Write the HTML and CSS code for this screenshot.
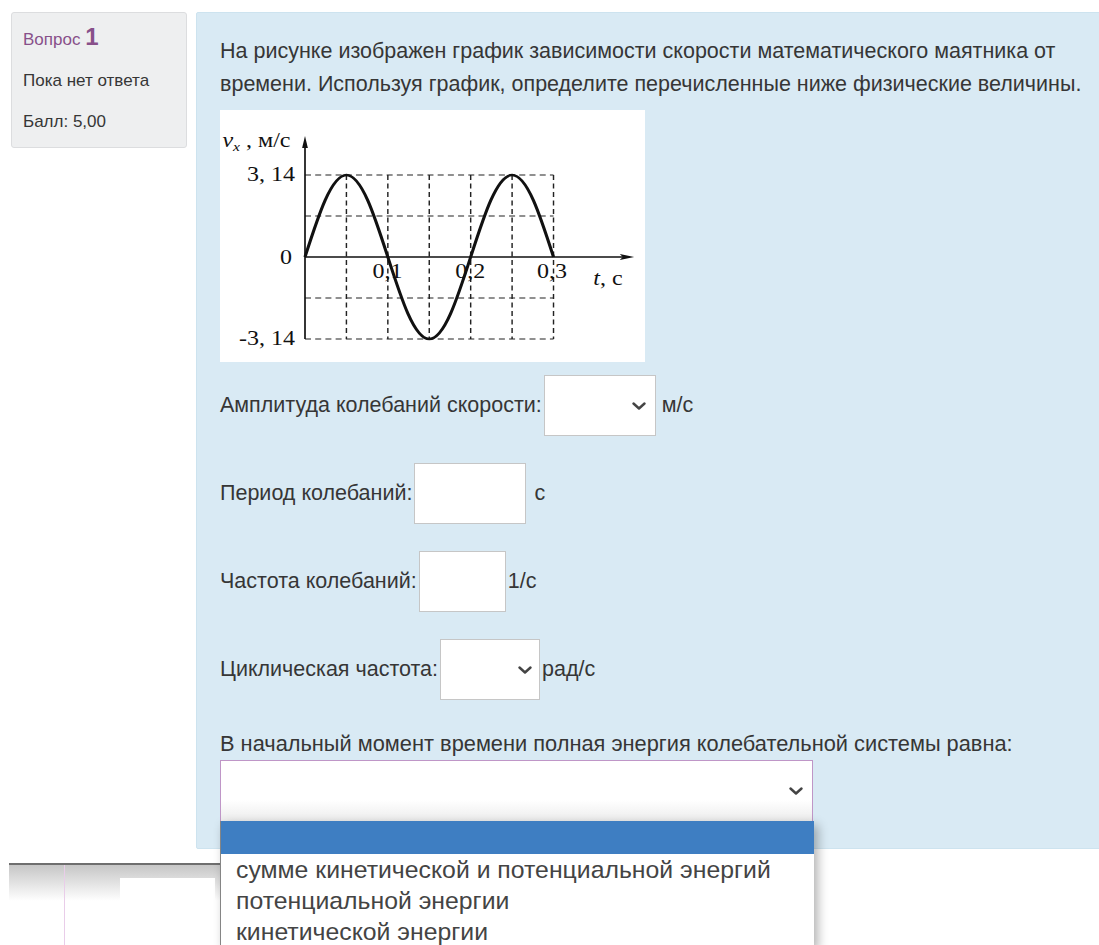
FILE: index.html
```html
<!DOCTYPE html>
<html lang="ru">
<head>
<meta charset="utf-8">
<title>Вопрос 1</title>
<link rel="stylesheet" href="styles.css">
</head>
<body>
<div class="que">
  <div class="info">
    <h3 class="no">Вопрос <span class="qno">1</span></h3>
    <div class="state">Пока нет ответа</div>
    <div class="grade">Балл: 5,00</div>
  </div>
  <div class="content">
    <div class="formulation">
      <p class="qtext">На рисунке изображен график зависимости скорости математического маятника от времени. Используя график, определите перечисленные ниже физические величины.</p>
      <div class="figure">
        <svg class="graph" viewBox="0 0 354 252" width="425" height="252" preserveAspectRatio="none">
          <rect width="354" height="252" fill="#fff"/>
          <g fill="none" stroke="#222" stroke-width="1.2" stroke-dasharray="5 3.5">
            <path d="M70.8 65 H277.8 M70.8 106 H277.8 M70.8 188 H277.8 M70.8 229 H277.8"/>
            <path d="M105.3 65 V229 M139.8 65 V229 M174.3 65 V229 M208.8 65 V229 M243.3 65 V229 M277.8 65 V229"/>
          </g>
          <path d="M70.8 229 V34 M70.8 147 H336" fill="none" stroke="#111" stroke-width="1.4"/>
          <path d="M70.8 26 L68.4 38 L73.2 38 Z" fill="#111"/>
          <path d="M345 147 L333 144 L335.5 147 L333 150 Z" fill="#111"/>
          <path d="M70.8 147 C82.05 105 92.81 65 105.3 65 C117.79 65 128.55 105 139.8 147 C151.05 189 161.81 229 174.3 229 C186.79 229 197.55 189 208.8 147 C220.05 105 230.81 65 243.3 65 C255.79 65 266.55 105 277.8 147" fill="none" stroke="#111" stroke-width="2.6"/>
          <g font-family="'Liberation Serif', 'Times New Roman', serif" font-size="20" fill="#111">
            <text x="62.5" y="71" text-anchor="end">3, 14</text>
            <text x="60" y="154" text-anchor="end">0</text>
            <text x="62.5" y="235" text-anchor="end">-3, 14</text>
            <text x="127" y="168">0,1</text>
            <text x="196" y="168">0,2</text>
            <text x="264" y="168">0,3</text>
            <text x="311" y="175"><tspan font-style="italic">t</tspan>, с</text>
            <text x="2" y="37"><tspan font-style="italic">v</tspan><tspan font-style="italic" font-size="13" dy="4">x</tspan><tspan dy="-4"> , м/с</tspan></text>
          </g>
        </svg>
      </div>
      <div class="answers">
        <div class="row">
          <span class="label">Амплитуда колебаний скорости:</span>
          <div class="field w-112"><svg class="chev" viewBox="0 0 14 8" width="14" height="8"><path d="M1.5 1.5 L7 6.5 L12.5 1.5"/></svg></div>
          <span class="unit unit-wide">м/с</span>
        </div>
        <div class="row">
          <span class="label">Период колебаний:</span>
          <div class="field w-112"></div>
          <span class="unit unit-mid">с</span>
        </div>
        <div class="row">
          <span class="label">Частота колебаний:</span>
          <div class="field w-87"></div>
          <span class="unit">1/с</span>
        </div>
        <div class="row">
          <span class="label">Циклическая частота:</span>
          <div class="field w-100 field-tight"><svg class="chev" viewBox="0 0 14 8" width="14" height="8"><path d="M1.5 1.5 L7 6.5 L12.5 1.5"/></svg></div>
          <span class="unit">рад/с</span>
        </div>
        <div class="group">
          <div class="group-label">В начальный момент времени полная энергия колебательной системы равна:</div>
          <div class="field select-wide">
            <svg class="chev" viewBox="0 0 14 8" width="14" height="8"><path d="M1.5 1.5 L7 6.5 L12.5 1.5"/></svg>
            <ul class="popup">
              <li class="selected"></li>
              <li>сумме кинетической и потенциальной энергий</li>
              <li>потенциальной энергии</li>
              <li>кинетической энергии</li>
            </ul>
          </div>
        </div>
      </div>
    </div>
  </div>
</div>
<div class="backdrop">
  <div class="backdrop-col"></div>
  <div class="backdrop-sheet"></div>
</div>
</body>
</html>
```
FILE: styles.css
```css
html, body {
  margin: 0;
  overflow: hidden;
  background: #fff;
}

body {
  width: 1099px;
  height: 945px;
  font-family: "Liberation Sans", Arial, sans-serif;
  color: #363636;
}

/* question block: info card + formulation panel */
.que {
  display: flex;
  align-items: flex-start;
  gap: 9px;
  padding: 12px 0 0 11px;
}

.info {
  flex: none;
  box-sizing: border-box;
  width: 176px;
  height: 136px;
  padding: 6px 0 0 11px;
  background: #eeeff0;
  border: 1px solid #dcdddf;
  border-radius: 3px;
}

.info .no,
.info .state,
.info .grade {
  margin: 0;
  font-size: 17px;
  font-weight: normal;
  line-height: 41px;
}

.info .no {
  color: #88508a;
}

.qno {
  font-size: 24px;
  font-weight: bold;
  line-height: 1;
}

.content {
  flex: none;
}

.formulation {
  box-sizing: border-box;
  width: 960px;
  padding: 22px 0 26px 23px;
  background: #d9eaf4;
  border: 1px solid #cde3ef;
  border-radius: 2px;
}

.qtext {
  width: 900px;
  margin: 0 0 9px;
  font-size: 21.5px;
  line-height: 33px;
}

.figure {
  margin-bottom: 13px;
  line-height: 0;
}

.graph {
  display: block;
}

/* answer rows */
.answers {
  display: flex;
  flex-direction: column;
  gap: 27px;
  font-size: 21.5px;
}

.row {
  display: flex;
  align-items: center;
  height: 61px;
}

.field {
  box-sizing: border-box;
  height: 61px;
  margin-left: 2px;
  padding-right: 9px;
  display: flex;
  align-items: center;
  justify-content: flex-end;
  background: #fff;
  border: 1px solid #c6c6c6;
}

.field-tight {
  padding-right: 7px;
}

.w-112 { width: 112px; }
.w-100 { width: 100px; }
.w-87  { width: 87px; }

.chev {
  display: block;
}

.chev path {
  fill: none;
  stroke: #444;
  stroke-width: 2.4;
  stroke-linecap: round;
  stroke-linejoin: round;
}

.unit {
  margin-left: 2px;
}

.unit-wide { margin-left: 6px; }
.unit-mid  { margin-left: 8px; }

.group-label {
  font-size: 21.8px;
  line-height: 33px;
}

/* open dropdown */
.select-wide {
  position: relative;
  width: 593px;
  height: 62px;
  margin-left: 0;
  border-color: #bf96c7;
  background: linear-gradient(#fff 65%, #ececec);
}

.popup {
  position: absolute;
  top: 100%;
  left: -1px;
  z-index: 5;
  width: 593px;
  margin: 0;
  padding: 0;
  list-style: none;
  background: #fff;
  border-left: 1px solid #858585;
  box-shadow: 4px 4px 10px rgba(0, 0, 0, 0.3);
  font-size: 24.8px;
  line-height: 31px;
  color: #444;
}

.popup li {
  height: 31px;
  padding-left: 15px;
  white-space: nowrap;
}

.popup .selected {
  height: 33px;
  background: #3e7ec2;
}

/* page area below the question */
.backdrop {
  display: flex;
  align-items: flex-start;
  width: 520px;
  height: 90px;
  margin: 14px 0 0 9px;
  border-top: 2px solid #6e6e6e;
  background: linear-gradient(#c6c6c6, #fff 36px);
}

.backdrop-col {
  align-self: stretch;
  margin-left: 55px;
  border-left: 1px solid #e9cde9;
}

.backdrop-sheet {
  width: 95px;
  height: 80px;
  margin: 13px 0 0 55px;
  background: #fff;
}
```
